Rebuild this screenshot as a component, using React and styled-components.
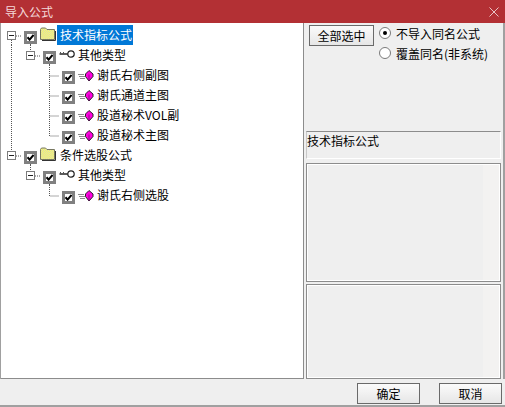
import React from "react";
import styled, { createGlobalStyle } from "styled-components";

const GlobalStyle = createGlobalStyle`
    html, body {
        margin: 0;
        padding: 0;
        background: #efefef;
    }
    body {
        font-family: "Noto Sans CJK SC", "Liberation Sans", sans-serif;
        font-size: 12px;
        color: #000;
    }
`;

const Window = styled.div`
    width: 505px;
    height: 407px;
    box-sizing: border-box;
    display: flex;
    flex-direction: column;
    overflow: hidden;
    background: #efefef;
    border-bottom: 2px solid #a0a0a0;
`;

const TitleBar = styled.div`
    height: 23px;
    flex: none;
    display: flex;
    align-items: center;
    justify-content: space-between;
    padding: 0 5px;
    background: #b33034;
    color: #f3d9da;
    line-height: 23px;
`;

const Body = styled.div`
    height: 356px;
    flex: none;
    display: flex;
    border-left: 1px solid #a0a0a0;
    border-right: 2px solid #a0a0a0;
`;

const TreePanel = styled.div`
    width: 303px;
    flex: none;
    box-sizing: border-box;
    padding: 2px 0 0 1px;
    background: #fff;
    border-right: 1px solid #8c8c8c;
    border-bottom: 1px solid #8c8c8c;
`;

const Row = styled.div`
    display: flex;
    height: 20px;
`;

const Cell = styled.div`
    width: 19px;
    flex: none;
    position: relative;
    display: flex;
    align-items: center;
    justify-content: center;
`;

const Line = styled.svg`
    position: absolute;
    left: 0;
    top: 0;
    width: 19px;
    height: 20px;
    overflow: visible;
`;

const Expander = styled.div`
    position: relative;
    width: 7px;
    height: 7px;
    margin-top: 1px;
    border: 1px solid #7c7c7c;
    background: #fff;
    display: flex;
    align-items: center;
    justify-content: center;
    &::after {
        content: "";
        width: 5px;
        height: 1px;
        background: #222;
    }
`;

const CheckBox = styled.div`
    position: relative;
    width: 7px;
    height: 7px;
    margin-top: 4px;
    border: 3px solid #808080;
    background: #fff;
    svg {
        display: block;
    }
`;

const Label = styled.span`
    margin-left: ${props => props.$gap}px;
    padding: 0 1px 0 3px;
    height: 20px;
    line-height: 20px;
    white-space: nowrap;
    background: ${props => props.$selected ? "#0078d7" : "transparent"};
    color: ${props => props.$selected ? "#fff" : "#000"};
`;

const IconSlot = styled.div`
    width: 16px;
    flex: none;
    display: flex;
    align-items: center;
`;

const Side = styled.div`
    flex: 1;
    min-width: 0;
    display: flex;
    flex-direction: column;
    padding: 2px 0 0 2px;
`;

const TopControls = styled.div`
    height: 106px;
    flex: none;
    display: flex;
    align-items: flex-start;
    padding-left: 3px;
`;

const Button = styled.button`
    box-sizing: border-box;
    width: ${props => props.$w}px;
    height: 21px;
    padding: 0;
    border: 1px solid #6a6a6a;
    background: linear-gradient(#fbfbfb, #e6e6e6);
    font: inherit;
    color: #000;
`;

const Options = styled.div`
    margin: -2px 0 0 5px;
    display: flex;
    flex-direction: column;
`;

const Option = styled.div`
    height: 20px;
    display: flex;
    align-items: center;
    gap: 5px;
    white-space: nowrap;
`;

const Radio = styled.span`
    width: 12px;
    height: 12px;
    box-sizing: border-box;
    border-radius: 50%;
    border: 1px solid #7a7a7a;
    background: #fff;
    display: flex;
    align-items: center;
    justify-content: center;
    &::after {
        content: "";
        width: 4px;
        height: 4px;
        border-radius: 50%;
        background: ${props => props.$on ? "#000" : "transparent"};
    }
`;

const InfoBox = styled.div`
    width: 195px;
    height: ${props => props.$h}px;
    flex: none;
    box-sizing: border-box;
    margin-bottom: ${props => props.$mb}px;
    border: 1px solid #8c8c8c;
    box-shadow: inset 0 0 0 1px #fff;
    background: linear-gradient(90deg, #efefef 176px, #f3f2f1 176px);
    line-height: 17px;
`;

const PlainInfo = styled(InfoBox)`
    border-bottom-color: #fff;
    border-left-color: #c8c8c8;
    border-right-color: #fff;
    box-shadow: none;
    background: #efefef;
`;

const Footer = styled.div`
    flex: 1;
    display: flex;
    justify-content: flex-end;
    align-items: flex-start;
    gap: 19px;
    padding: 4px 3px 0 0;
`;

const Cross = () => (
    <svg width="10" height="10" viewBox="0 0 10 10" style={{ marginRight: 1 }}>
        <path d="M0.5 0.5 L9.5 9.5 M9.5 0.5 L0.5 9.5" stroke="#e8c4c5" strokeWidth="1" fill="none" />
    </svg>
);

// dotted tree guides, one svg per cell
const Guide = ({ d }) => (
    <Line viewBox="0 0 19 20">
        <path d={d} stroke="#555" strokeWidth="1" strokeDasharray="1 1" fill="none" />
    </Line>
);

const Tick = () => (
    <svg width="7" height="7" viewBox="0 0 7 7">
        <path d="M0.5 3.2 L2.6 5.6 L6.6 0.8" stroke="#000" strokeWidth="2" fill="none" />
    </svg>
);

const Folder = () => (
    <svg width="16" height="14" viewBox="0 0 16 14" style={{ marginTop: -3 }}>
        <defs>
            <pattern id="dither" width="2" height="2" patternUnits="userSpaceOnUse">
                <rect width="2" height="2" fill="#ffff66" />
                <rect width="1" height="1" fill="#d6d6b0" />
                <rect x="1" y="1" width="1" height="1" fill="#d6d6b0" />
            </pattern>
        </defs>
        <path d="M0.5 2.5 L1.5 1 H5.5 L7 2.5 H14.5 V12.5 H0.5 Z" fill="url(#dither)" stroke="#777760" strokeWidth="1" />
        <path d="M15.5 4 V13.5 H2" stroke="#333" fill="none" />
    </svg>
);

const KeyIcon = () => (
    <svg width="16" height="10" viewBox="0 0 16 10" style={{ marginTop: -2 }}>
        <circle cx="12" cy="5" r="3.2" fill="#fff" stroke="#222" strokeWidth="1.2" />
        <path d="M9 5 H0.5" stroke="#333" strokeWidth="1.6" fill="none" />
        <path d="M1.5 3 V5 M4.5 3 V5" stroke="#555" strokeWidth="1" fill="none" />
    </svg>
);

const FormulaIcon = () => (
    <svg width="16" height="12" viewBox="0 0 16 12" style={{ marginTop: 2 }}>
        <path d="M0 4.5 H6 M1 6.5 H7 M2 8.5 H7" stroke="#8a8a8a" strokeWidth="1" fill="none" />
        <path d="M11 0.5 L15 4 V6.5 L11 11 L7.5 6.5 V4 Z" fill="#ff00e0" stroke="#222" strokeWidth="1" />
        <path d="M11 4.5 V10.5" stroke="#9a0090" strokeWidth="1" />
    </svg>
);

const H_RIGHT = "M10 11 H19";
const cells = {
    blank: () => <Cell />,
    pipe: () => <Cell><Guide d="M9.5 0 V20" /></Cell>,
    elbow: () => <Cell><Guide d="M9.5 0 V11 H19" /></Cell>,
    tee: () => <Cell><Guide d="M9.5 0 V20 M9.5 11 H19" /></Cell>,
    minusDown: () => <Cell><Guide d={H_RIGHT + " M9.5 11 V20"} /><Expander /></Cell>,
    minusUp: () => <Cell><Guide d={H_RIGHT + " M9.5 0 V11"} /><Expander /></Cell>,
    check: () => <Cell><CheckBox><Tick /></CheckBox></Cell>,
    checkDown: () => <Cell><Guide d="M9.5 11 V20" /><CheckBox><Tick /></CheckBox></Cell>,
};

const TreeRow = ({ guides, kind, text, selected }) => (
    <Row>
        {guides.map((g, i) => <React.Fragment key={i}>{cells[g]()}</React.Fragment>)}
        <IconSlot>
            {kind === "folder" && <Folder />}
            {kind === "key" && <KeyIcon />}
            {kind === "formula" && <FormulaIcon />}
        </IconSlot>
        <Label $gap={kind === "folder" ? 1 : 0} $selected={selected}>{text}</Label>
    </Row>
);

const rows = [
    { guides: ["minusDown", "checkDown"], kind: "folder", text: "技术指标公式", selected: true },
    { guides: ["pipe", "minusUp", "checkDown"], kind: "key", text: "其他类型" },
    { guides: ["pipe", "blank", "tee", "check"], kind: "formula", text: "谢氏右侧副图" },
    { guides: ["pipe", "blank", "tee", "check"], kind: "formula", text: "谢氏通道主图" },
    { guides: ["pipe", "blank", "tee", "check"], kind: "formula", text: "股道秘术VOL副" },
    { guides: ["pipe", "blank", "elbow", "check"], kind: "formula", text: "股道秘术主图" },
    { guides: ["minusUp", "checkDown"], kind: "folder", text: "条件选股公式" },
    { guides: ["blank", "minusUp", "checkDown"], kind: "key", text: "其他类型" },
    { guides: ["blank", "blank", "elbow", "check"], kind: "formula", text: "谢氏右侧选股" },
];

export default function App() {
    return (
        <Window>
            <GlobalStyle />
            <TitleBar>
                <span>导入公式</span>
                <Cross />
            </TitleBar>
            <Body>
                <TreePanel>
                    {rows.map((r, i) => <TreeRow key={i} {...r} />)}
                </TreePanel>
                <Side>
                    <TopControls>
                        <Button $w={65}>全部选中</Button>
                        <Options>
                            <Option><Radio $on />不导入同名公式</Option>
                            <Option><Radio />覆盖同名(非系统)</Option>
                        </Options>
                    </TopControls>
                    <PlainInfo $h={28} $mb={4}>技术指标公式</PlainInfo>
                    <InfoBox $h={119} $mb={2} />
                    <InfoBox $h={95} $mb={0} />
                </Side>
            </Body>
            <Footer>
                <Button $w={63}>确定</Button>
                <Button $w={63}>取消</Button>
            </Footer>
        </Window>
    );
}
